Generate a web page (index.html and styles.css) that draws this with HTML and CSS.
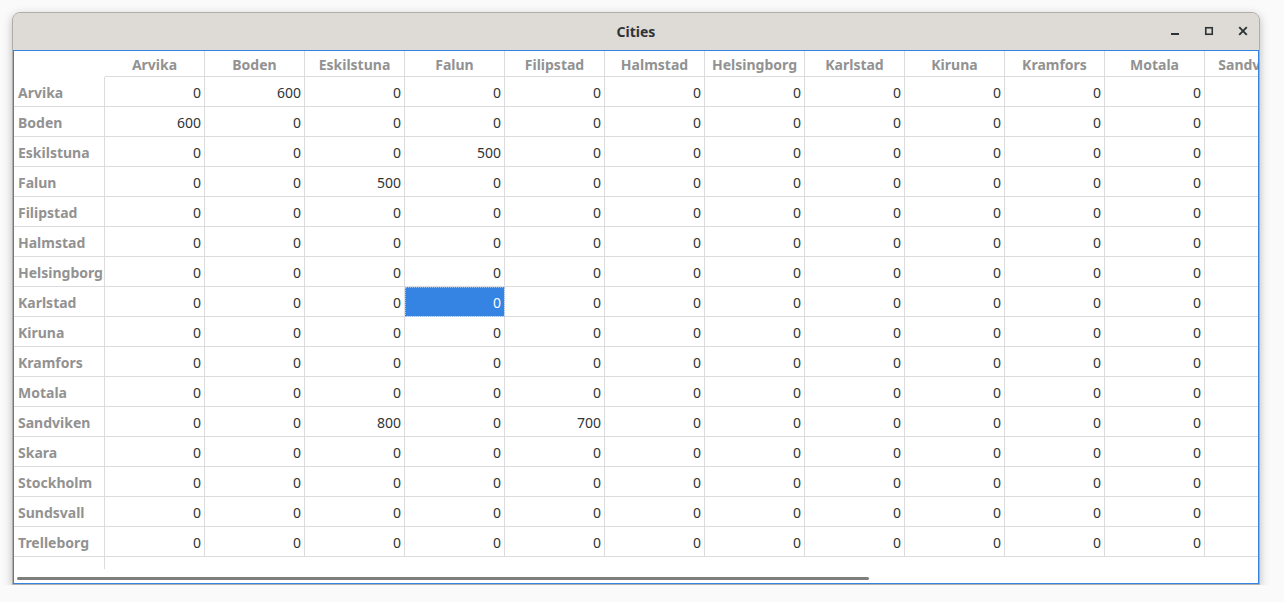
FILE: index.html
```html
<!DOCTYPE html>
<html>
<head>
<meta charset="utf-8">
<title>Cities</title>
<link rel="stylesheet" href="styles.css">
</head>
<body>
<div class="window">
  <div class="titlebar">
    <div class="title">Cities</div>
    <div class="controls">
      <span class="btn"><svg width="10" height="10" viewBox="0 0 10 10"><rect x="1" y="7" width="8" height="2" fill="#2e3436"/></svg></span>
      <span class="btn"><svg width="10" height="10" viewBox="0 0 10 10"><rect x="1.75" y="1.75" width="6.5" height="6.5" fill="none" stroke="#2e3436" stroke-width="1.6"/></svg></span>
      <span class="btn"><svg width="10" height="10" viewBox="0 0 10 10"><path d="M1.2 1.2 L8.8 8.8 M8.8 1.2 L1.2 8.8" stroke="#2e3436" stroke-width="1.9"/></svg></span>
    </div>
  </div>
  <div class="content">
    <div class="grid">
      <div class="corner"></div>
      <div class="h">Arvika</div><div class="h">Boden</div><div class="h">Eskilstuna</div><div class="h">Falun</div><div class="h">Filipstad</div><div class="h">Halmstad</div><div class="h">Helsingborg</div><div class="h">Karlstad</div><div class="h">Kiruna</div><div class="h">Kramfors</div><div class="h">Motala</div><div class="h">Sandviken</div><div class="h">Skara</div><div class="h">Stockholm</div><div class="h">Sundsvall</div><div class="h">Trelleborg</div>

      <div class="r">Arvika</div><div class="c">0</div><div class="c">600</div><div class="c">0</div><div class="c">0</div><div class="c">0</div><div class="c">0</div><div class="c">0</div><div class="c">0</div><div class="c">0</div><div class="c">0</div><div class="c">0</div><div class="c">0</div><div class="c">0</div><div class="c">0</div><div class="c">0</div><div class="c">0</div>
      <div class="r">Boden</div><div class="c">600</div><div class="c">0</div><div class="c">0</div><div class="c">0</div><div class="c">0</div><div class="c">0</div><div class="c">0</div><div class="c">0</div><div class="c">0</div><div class="c">0</div><div class="c">0</div><div class="c">0</div><div class="c">0</div><div class="c">0</div><div class="c">0</div><div class="c">0</div>
      <div class="r">Eskilstuna</div><div class="c">0</div><div class="c">0</div><div class="c">0</div><div class="c">500</div><div class="c">0</div><div class="c">0</div><div class="c">0</div><div class="c">0</div><div class="c">0</div><div class="c">0</div><div class="c">0</div><div class="c">800</div><div class="c">0</div><div class="c">0</div><div class="c">0</div><div class="c">0</div>
      <div class="r">Falun</div><div class="c">0</div><div class="c">0</div><div class="c">500</div><div class="c">0</div><div class="c">0</div><div class="c">0</div><div class="c">0</div><div class="c">0</div><div class="c">0</div><div class="c">0</div><div class="c">0</div><div class="c">0</div><div class="c">0</div><div class="c">0</div><div class="c">0</div><div class="c">0</div>
      <div class="r">Filipstad</div><div class="c">0</div><div class="c">0</div><div class="c">0</div><div class="c">0</div><div class="c">0</div><div class="c">0</div><div class="c">0</div><div class="c">0</div><div class="c">0</div><div class="c">0</div><div class="c">0</div><div class="c">700</div><div class="c">0</div><div class="c">0</div><div class="c">0</div><div class="c">0</div>
      <div class="r">Halmstad</div><div class="c">0</div><div class="c">0</div><div class="c">0</div><div class="c">0</div><div class="c">0</div><div class="c">0</div><div class="c">0</div><div class="c">0</div><div class="c">0</div><div class="c">0</div><div class="c">0</div><div class="c">0</div><div class="c">0</div><div class="c">0</div><div class="c">0</div><div class="c">0</div>
      <div class="r">Helsingborg</div><div class="c">0</div><div class="c">0</div><div class="c">0</div><div class="c">0</div><div class="c">0</div><div class="c">0</div><div class="c">0</div><div class="c">0</div><div class="c">0</div><div class="c">0</div><div class="c">0</div><div class="c">0</div><div class="c">0</div><div class="c">0</div><div class="c">0</div><div class="c">0</div>
      <div class="r">Karlstad</div><div class="c">0</div><div class="c">0</div><div class="c">0</div><div class="c sel">0</div><div class="c">0</div><div class="c">0</div><div class="c">0</div><div class="c">0</div><div class="c">0</div><div class="c">0</div><div class="c">0</div><div class="c">0</div><div class="c">0</div><div class="c">0</div><div class="c">0</div><div class="c">0</div>
      <div class="r">Kiruna</div><div class="c">0</div><div class="c">0</div><div class="c">0</div><div class="c">0</div><div class="c">0</div><div class="c">0</div><div class="c">0</div><div class="c">0</div><div class="c">0</div><div class="c">0</div><div class="c">0</div><div class="c">0</div><div class="c">0</div><div class="c">0</div><div class="c">0</div><div class="c">0</div>
      <div class="r">Kramfors</div><div class="c">0</div><div class="c">0</div><div class="c">0</div><div class="c">0</div><div class="c">0</div><div class="c">0</div><div class="c">0</div><div class="c">0</div><div class="c">0</div><div class="c">0</div><div class="c">0</div><div class="c">0</div><div class="c">0</div><div class="c">0</div><div class="c">0</div><div class="c">0</div>
      <div class="r">Motala</div><div class="c">0</div><div class="c">0</div><div class="c">0</div><div class="c">0</div><div class="c">0</div><div class="c">0</div><div class="c">0</div><div class="c">0</div><div class="c">0</div><div class="c">0</div><div class="c">0</div><div class="c">0</div><div class="c">0</div><div class="c">0</div><div class="c">0</div><div class="c">0</div>
      <div class="r">Sandviken</div><div class="c">0</div><div class="c">0</div><div class="c">800</div><div class="c">0</div><div class="c">700</div><div class="c">0</div><div class="c">0</div><div class="c">0</div><div class="c">0</div><div class="c">0</div><div class="c">0</div><div class="c">0</div><div class="c">0</div><div class="c">0</div><div class="c">0</div><div class="c">0</div>
      <div class="r">Skara</div><div class="c">0</div><div class="c">0</div><div class="c">0</div><div class="c">0</div><div class="c">0</div><div class="c">0</div><div class="c">0</div><div class="c">0</div><div class="c">0</div><div class="c">0</div><div class="c">0</div><div class="c">0</div><div class="c">0</div><div class="c">0</div><div class="c">0</div><div class="c">0</div>
      <div class="r">Stockholm</div><div class="c">0</div><div class="c">0</div><div class="c">0</div><div class="c">0</div><div class="c">0</div><div class="c">0</div><div class="c">0</div><div class="c">0</div><div class="c">0</div><div class="c">0</div><div class="c">0</div><div class="c">0</div><div class="c">0</div><div class="c">0</div><div class="c">0</div><div class="c">0</div>
      <div class="r">Sundsvall</div><div class="c">0</div><div class="c">0</div><div class="c">0</div><div class="c">0</div><div class="c">0</div><div class="c">0</div><div class="c">0</div><div class="c">0</div><div class="c">0</div><div class="c">0</div><div class="c">0</div><div class="c">0</div><div class="c">0</div><div class="c">0</div><div class="c">0</div><div class="c">0</div>
      <div class="r">Trelleborg</div><div class="c">0</div><div class="c">0</div><div class="c">0</div><div class="c">0</div><div class="c">0</div><div class="c">0</div><div class="c">0</div><div class="c">0</div><div class="c">0</div><div class="c">0</div><div class="c">0</div><div class="c">0</div><div class="c">0</div><div class="c">0</div><div class="c">0</div><div class="c">0</div>
    </div>
    <div class="filler"></div>
    <div class="scrollbar"></div>
  </div>
</div>
</body>
</html>
```

FILE: styles.css
```css
html, body {
  margin: 0;
  padding: 0;
}
body {
  background: #fafafa;
  padding: 12px 0 0 12px;
  font-family: "Noto Sans", "DejaVu Sans", sans-serif;
  font-size: 14px;
}
.window {
  width: 1248px;
  height: 573px;
  box-sizing: border-box;
  border: 1px solid #b0adaa;
  border-radius: 8px 8px 0 0;
  background: #dfdcd8;
  box-shadow: 0 3px 10px rgba(0, 0, 0, 0.25);
  display: flex;
  flex-direction: column;
}
.titlebar {
  height: 37px;
  flex: none;
  display: flex;
  align-items: center;
  justify-content: center;
  position: relative;
  border-radius: 7px 7px 0 0;
  background: #dedbd7;
}
.title {
  font-weight: bold;
  font-size: 14px;
  color: #2e3436;
}
.controls {
  position: absolute;
  right: 11px;
  top: 13px;
  display: flex;
  gap: 24px;
}
.btn {
  width: 10px;
  height: 10px;
  display: block;
}
.btn svg {
  display: block;
}
.content {
  flex: 1;
  min-height: 0;
  border: 1px solid #3584e4;
  background: #ffffff;
  position: relative;
  overflow: hidden;
  display: flex;
  flex-direction: column;
}
.grid {
  display: grid;
  grid-template-columns: 91px repeat(16, 100px);
  grid-template-rows: 26px;
  grid-auto-rows: 30px;
  flex: none;
}
.grid > div {
  box-sizing: border-box;
  white-space: nowrap;
  overflow: hidden;
}
.corner {
  background: #fff;
}
.h {
  border-right: 1px solid #dcdcdc;
  border-bottom: 1px solid #dcdcdc;
  color: #929292;
  font-weight: bold;
  text-align: center;
  padding-top: 3px;
  line-height: 22px;
}
.r {
  border-right: 1px solid #dcdcdc;
  border-bottom: 1px solid #dcdcdc;
  color: #929292;
  font-weight: bold;
  padding-left: 4px;
  padding-top: 2px;
  line-height: 27px;
}
.c {
  border-right: 1px solid #dcdcdc;
  border-bottom: 1px solid #dcdcdc;
  color: #2e3436;
  text-align: right;
  padding-right: 3px;
  padding-top: 2px;
  line-height: 27px;
}
.c.sel {
  background: #3584e4;
  background-clip: padding-box;
  color: #ffffff;
  outline: 1px dotted #9cc2f2;
  outline-offset: -1px;
}
.filler {
  width: 91px;
  height: 12px;
  box-sizing: border-box;
  border-right: 1px solid #dcdcdc;
  flex: none;
}
.scrollbar {
  position: absolute;
  left: 3px;
  bottom: 3px;
  width: 852px;
  height: 3px;
  border-radius: 2px;
  background: #7d7f7f;
}
```
